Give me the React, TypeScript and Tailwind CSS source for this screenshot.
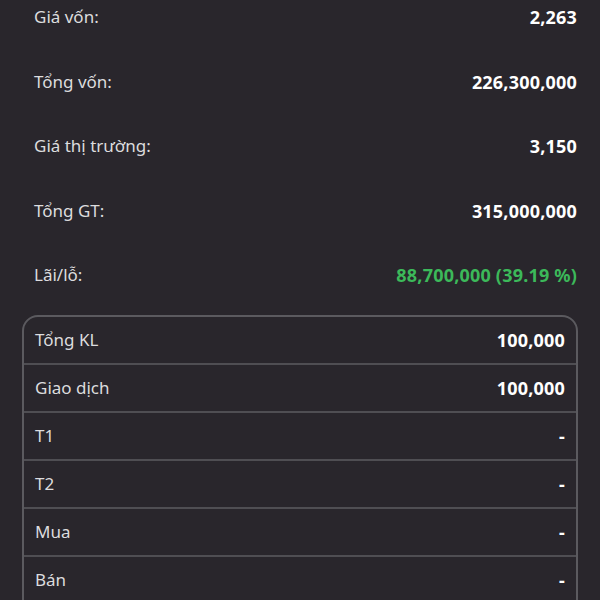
import React from "react";

const top = [
  { l: "Giá vốn:", v: "2,263" },
  { l: "Tổng vốn:", v: "226,300,000" },
  { l: "Giá thị trường:", v: "3,150" },
  { l: "Tổng GT:", v: "315,000,000" },
  { l: "Lãi/lỗ:", v: "88,700,000 (39.19 %)", green: true },
];

const card = [
  { l: "Tổng KL", v: "100,000" },
  { l: "Giao dịch", v: "100,000" },
  { l: "T1", v: "-" },
  { l: "T2", v: "-" },
  { l: "Mua", v: "-" },
  { l: "Bán", v: "-" },
];

export default function App() {
  return (
    <div
      className="w-[600px] h-[600px] overflow-hidden bg-[#29262c] text-[17px]"
      style={{ fontFamily: '"Noto Sans", sans-serif' }}
    >
      <div className="flex flex-col gap-[40.5px] pt-[5px] pl-[34px] pr-[23px]">
        {top.map((r) => (
          <div key={r.l} className="flex justify-between items-center h-[24px] leading-[24px]">
            <span className="text-[#dcdcde]">{r.l}</span>
            <span className={"text-[18px] font-bold tracking-[0.2px] " + (r.green ? "text-[#3cb95a]" : "text-white")}>{r.v}</span>
          </div>
        ))}
      </div>
      <div className="mt-[28px] ml-[22px] mr-[22px] border-2 border-[#5b5a5f] rounded-[16px] flex flex-col">
        {card.map((r) => (
          <div
            key={r.l}
            className="flex justify-between items-center h-[48px] px-[11px] border-b-2 border-[#4f4e53]"
          >
            <span className="text-[#dcdcde]">{r.l}</span>
            <span className="text-[18px] font-bold tracking-[0.2px] text-white">{r.v}</span>
          </div>
        ))}
        <div className="h-[48px]" />
      </div>
    </div>
  );
}
